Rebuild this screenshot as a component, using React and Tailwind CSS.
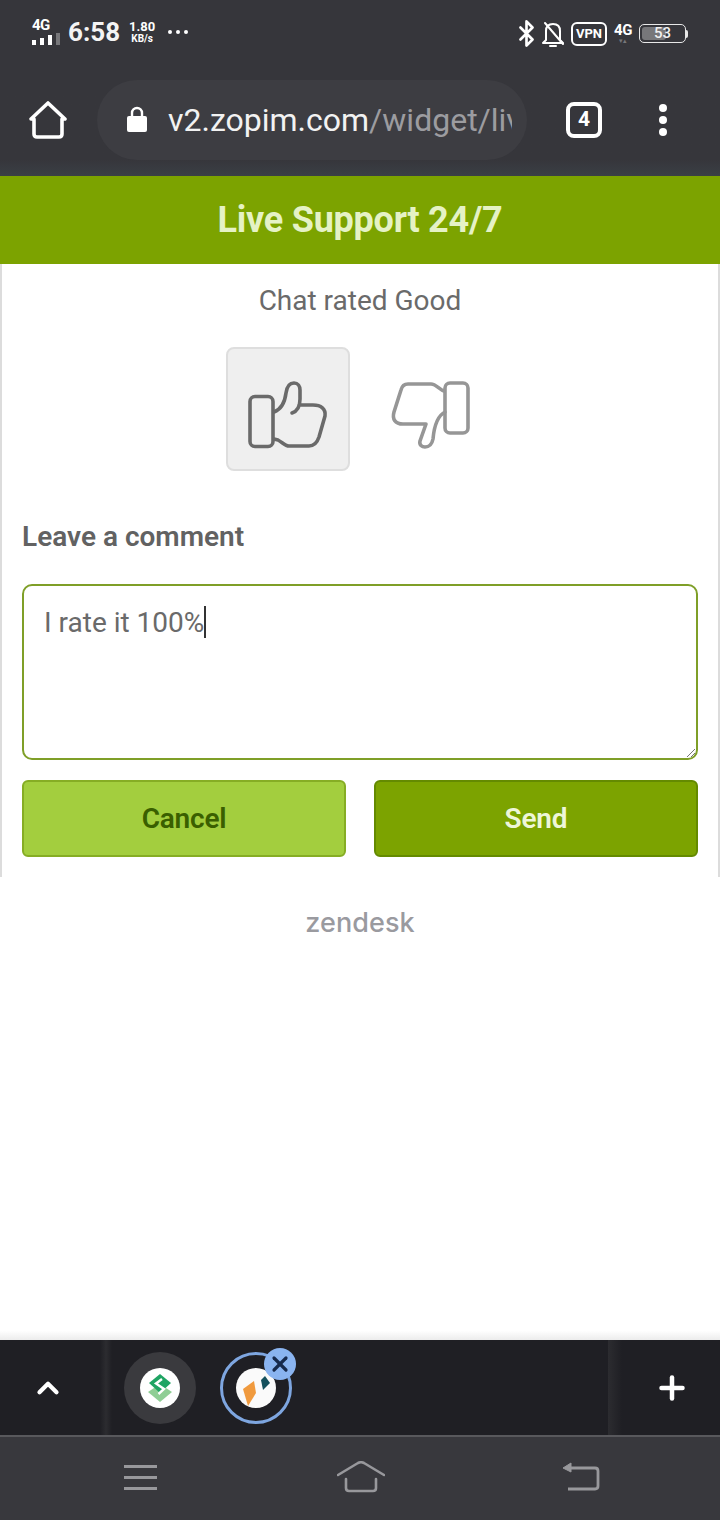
import React from "react";
import { Bluetooth, X, Plus, ChevronUp } from "lucide-react";

const roboto = { fontFamily: "Roboto, sans-serif" };

const SignalBars = () => (
  <svg width="29" height="12" viewBox="0 0 29 12" className="mt-[1px]">
    <rect x="0" y="7" width="4" height="5" fill="#fff" />
    <rect x="8" y="5" width="4" height="7" fill="#fff" />
    <rect x="16" y="2" width="4" height="10" fill="#fff" />
    <rect x="24" y="0" width="4" height="12" fill="#77777a" />
  </svg>
);

const MutedBell = () => (
  <svg width="22" height="26" viewBox="0 0 22 26" fill="none" stroke="#fff" strokeWidth="2" strokeLinejoin="round" strokeLinecap="round">
    <path d="M4 19 L4 10 C4 5 7 3 11 3 C15 3 18 5 18 10 L18 19 L21 22 L1 22 Z" />
    <path d="M8 25 L14 25" />
    <path d="M3 2 L21 23" />
  </svg>
);

const ThumbUp = () => (
  <svg width="100" height="80" viewBox="30 40 100 80" fill="none" stroke="#6a6a6a" strokeWidth="3.6" strokeLinecap="round" strokeLinejoin="round">
    <rect x="40" y="61.5" width="23" height="50" rx="5" />
    <path d="M64 77 C72 74 75 66 76 58 C77 51 80 48 84 48 C88 48 90 51 90 55 L90 64 C90 70 88 76 82 78 M89 70 L103 70 C111 70 116 74 115 81 L109 102 C107 108 104 111 99 111 L79 111 C75 111 72 107 68 105 L64 104" />
  </svg>
);

const ThumbDown = () => (
  <svg width="90" height="80" viewBox="175 40 90 80" fill="none" stroke="#969696" strokeWidth="3.6" strokeLinecap="round" strokeLinejoin="round">
    <rect x="235" y="48" width="23" height="50" rx="5" />
    <path d="M234 56 C230 55 226 49 221 49 L198 49 C194 49 192 51 191 55 L184 77 C182 84 185 89 193 89 L216 89 L210 106 C209 110 212 112 215 112 C220 112 222 109 223 104 C224 93 227 81 235 77" />
  </svg>
);

const SheetsLogo = () => (
  <svg width="24" height="28" viewBox="0 0 24 28">
    <path d="M12 10 L24 18 L12 28 L0 18 Z" fill="#8fce95" />
    <path d="M12 0 L23 9 L12 19 L1 9 Z" fill="#1fa463" />
    <path d="M14 5 L8 9.5 L16 15 L10.5 20" fill="none" stroke="#fff" strokeWidth="2.4" />
  </svg>
);

const ZopimLogo = () => (
  <svg width="40" height="40" viewBox="0 0 40 40">
    <path d="M7 21 L18 13 L20 25 L12 38 Z" fill="#f09a3e" />
    <path d="M25 12 L29 8 L34 15 L27 22 Z" fill="#14505c" />
  </svg>
);

export default function App() {
  return (
    <div className="w-[720px] h-[1520px] flex flex-col bg-white overflow-hidden" style={roboto}>
      {/* Status bar */}
      <div className="h-[64px] bg-[#36363b] flex items-start justify-between text-white">
        <div className="flex items-center pl-[32px] pt-[18px]">
          <div className="flex flex-col w-[30px]">
            <span className="text-[15px] font-bold leading-[13px] tracking-[-0.5px]">4G</span>
            <SignalBars />
          </div>
          <span className="ml-[6px] text-[26px] font-bold leading-[28px] text-[#f4f4f4]">6:58</span>
          <div className="ml-[8px] flex flex-col items-center w-[28px] font-bold">
            <span className="text-[13px] leading-[13px]">1.80</span>
            <span className="text-[10px] leading-[11px]">KB/s</span>
          </div>
          <div className="ml-[12px] flex gap-[4px]">
            <span className="w-[4px] h-[4px] rounded-full bg-white" />
            <span className="w-[4px] h-[4px] rounded-full bg-white" />
            <span className="w-[4px] h-[4px] rounded-full bg-white" />
          </div>
        </div>
        <div className="flex items-center pt-[19px] pr-[32px]">
          <Bluetooth size={29} strokeWidth={2.2} className="text-white" />
          <div className="ml-[1px]">
            <MutedBell />
          </div>
          <div className="ml-[7px] w-[36px] h-[24px] border-2 border-white rounded-[6px] flex items-center justify-center text-[13px] font-bold">
            VPN
          </div>
          <div className="ml-[6px] w-[20px] flex flex-col items-center">
            <span className="text-[15px] font-bold leading-[14px] tracking-[-0.5px]">4G</span>
            <span className="text-[7px] leading-[8px] text-[#77777a]">▾▴</span>
          </div>
          <div className="ml-[6px] relative w-[47px] h-[19px] border border-[#e8e8e8] rounded-[5px] flex items-center justify-center">
            <div className="absolute left-[2px] top-[2px] bottom-[2px] w-[24px] rounded-[3px] bg-[#77777a]" />
            <span className="relative text-[15px] font-medium text-[#f0f0f0]">53</span>
          </div>
          <div className="w-[2px] h-[8px] bg-[#e8e8e8] rounded-r-full" />
        </div>
      </div>

      {/* Browser toolbar */}
      <div className="h-[112px] bg-gradient-to-b from-[#36363b] from-[85%] to-[#3a3f45] flex items-center">
        <svg width="38" height="38" viewBox="0 0 38 38" className="ml-[29px]" fill="none" stroke="#fff" strokeWidth="3.6" strokeLinecap="round" strokeLinejoin="round">
          <path d="M2 18 L19 2 L36 18 L33 18 L33 33 C33 35 32 36 30 36 L8 36 C6 36 5 35 5 33 L5 18 Z" />
        </svg>
        <div className="ml-[30px] w-[430px] h-[80px] rounded-full bg-[#3d3d42] flex items-center">
          <svg width="20" height="28" viewBox="0 0 20 28" className="ml-[30px]">
            <path d="M5 12 L5 7 A5 5 0 0 1 15 7 L15 12" fill="none" stroke="#fff" strokeWidth="2.4" />
            <rect x="0" y="10" width="20" height="16" rx="2" fill="#fff" />
          </svg>
          <div className="ml-[21px] w-[344px] overflow-hidden whitespace-nowrap text-[32px] leading-[40px]">
            <span className="text-[#f2f2f2]">v2.zopim.com</span>
            <span className="text-[#9c9ca0]">/widget/liv</span>
          </div>
        </div>
        <div className="ml-[39px] w-[36px] h-[36px] border-[4px] border-white rounded-[8px] flex items-center justify-center text-white text-[21px] font-bold">
          4
        </div>
        <div className="ml-[57px] flex flex-col gap-[4px]">
          <span className="w-[8px] h-[8px] rounded-full bg-white" />
          <span className="w-[8px] h-[8px] rounded-full bg-white" />
          <span className="w-[8px] h-[8px] rounded-full bg-white" />
        </div>
      </div>

      {/* Chat header */}
      <div className="h-[88px] bg-[#7ca300] flex items-center justify-center text-[36px] font-bold text-[#e5f2c5] tracking-[-0.25px]">
        Live Support 24/7
      </div>

      {/* Rating panel */}
      <div className="h-[613px] border-x-2 border-[#dcdcdc] px-[20px] flex flex-col text-[#6a6a6a]">
        <p className="mt-[19px] text-center text-[28px] leading-[36px]">Chat rated Good</p>
        <div className="mt-[28px] flex justify-center gap-[20px]">
          <div className="w-[124px] h-[124px] bg-[#efefef] border-2 border-[#dedede] rounded-[8px] pl-[12px] pt-[26px]">
            <ThumbUp />
          </div>
          <div className="w-[124px] h-[124px] pl-[15px] pt-[28px]">
            <ThumbDown />
          </div>
        </div>
        <p className="mt-[48px] text-[28px] leading-[36px] font-semibold text-[#626262]">Leave a comment</p>
        <div className="relative mt-[29px] h-[176px] border-2 border-[#7f9f28] rounded-[10px] pl-[20px] pt-[19px] text-[28px] leading-[36px]">
          I rate it 100%<span className="inline-block w-[2px] h-[32px] bg-[#333] align-[-6px]" />
          <svg width="8" height="8" viewBox="0 0 8 8" className="absolute right-[1px] bottom-[1px]" stroke="#777" strokeWidth="1">
            <path d="M0 8 L8 0 M4 8 L8 4" />
          </svg>
        </div>
        <div className="mt-[20px] flex gap-[28px]">
          <div className="flex-1 h-[77px] bg-[#a3ce3e] border-2 border-[#86ad24] rounded-[6px] flex items-center justify-center text-[28px] font-semibold text-[#3a5f00] tracking-[-0.2px]">
            Cancel
          </div>
          <div className="flex-1 h-[77px] bg-[#7ca300] border-2 border-[#648a00] rounded-[6px] flex items-center justify-center text-[28px] font-semibold text-[#eef6d8] tracking-[-0.2px]">
            Send
          </div>
        </div>
      </div>

      {/* Zendesk footer */}
      <div className="flex-1 flex justify-center pt-[28px] bg-gradient-to-b from-white from-[98%] to-[#ececec]">
        <span className="text-[27px] leading-[36px] font-medium text-[#9a9a9f] tracking-[0.1px]" style={{ fontFamily: "Inter, sans-serif" }}>
          zendesk
        </span>
      </div>

      {/* Tab strip */}
      <div className="h-[97px] bg-[#1f1f24] border-b-2 border-[#58585c] flex items-center">
        <div className="w-[100px] h-full flex items-center justify-center">
          <ChevronUp size={34} strokeWidth={3} className="text-white -ml-[4px]" />
        </div>
        <div className="w-[12px] h-full bg-gradient-to-r from-[#1f1f24] via-[#2c2c30] to-[#1f1f24]" />
        <div className="ml-[12px] w-[72px] h-[72px] rounded-full bg-[#3a3a3e] flex items-center justify-center">
          <div className="w-[40px] h-[40px] rounded-full bg-white flex items-center justify-center">
            <SheetsLogo />
          </div>
        </div>
        <div className="relative ml-[24px] w-[72px] h-[72px] rounded-full border-[3px] border-[#7ea6e0] flex items-center justify-center">
          <div className="w-[40px] h-[40px] rounded-full bg-[#fafafa] flex items-center justify-center">
            <ZopimLogo />
          </div>
          <div className="absolute left-[41px] top-[-7px] w-[32px] h-[32px] rounded-full bg-[#8ab4f0] flex items-center justify-center">
            <X size={24} strokeWidth={3.2} className="text-[#172a4d]" />
          </div>
        </div>
        <div className="ml-auto w-[14px] h-full bg-gradient-to-r from-[#2c2c30] to-[#1f1f24]" />
        <div className="w-[98px] h-full flex items-center justify-center pl-[2px]">
          <Plus size={36} strokeWidth={3} className="text-white" />
        </div>
      </div>

      {/* Android nav bar */}
      <div className="h-[83px] bg-[#38383d] flex items-center pb-[3px]">
        <div className="ml-[124px] flex flex-col gap-[8px]">
          <span className="w-[33px] h-[3px] bg-[#98989c]" />
          <span className="w-[33px] h-[3px] bg-[#98989c]" />
          <span className="w-[33px] h-[3px] bg-[#98989c]" />
        </div>
        <svg width="48" height="32" viewBox="0 0 48 32" className="ml-[180px]" fill="none" stroke="#98989c" strokeWidth="2.6" strokeLinecap="round" strokeLinejoin="round">
          <path d="M1 14 L21 2 Q24 0.5 27 2 L47 14 M9 18 L9 27 Q9 30 12 30 L36 30 Q39 30 39 27 L39 18" />
        </svg>
        <svg width="38" height="30" viewBox="0 0 38 30" className="ml-[177px]" fill="none" stroke="#98989c" strokeWidth="2.8" strokeLinejoin="round">
          <path d="M6 6 L33 6 Q36 6 36 9 L36 24 Q36 27 33 27 L6 27" />
          <path d="M1 6 L9 1 L9 10 Z" fill="#98989c" strokeWidth="1" />
        </svg>
      </div>
    </div>
  );
}
